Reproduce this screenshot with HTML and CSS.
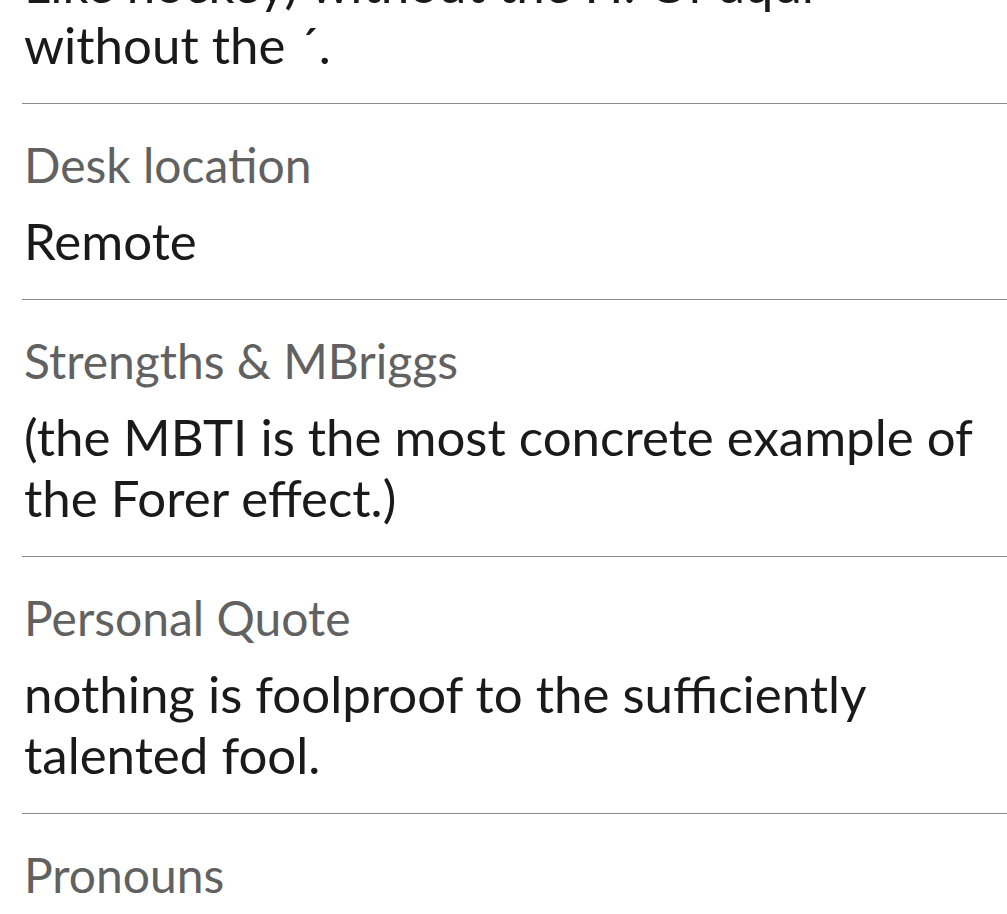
FILE: index.html
```html
<!DOCTYPE html>
<html lang="en">
<head>
<meta charset="utf-8">
<title>Profile fields</title>
<link rel="stylesheet" href="styles.css">
</head>
<body>
<div class="fields">
  <div class="field">
    <div class="label">Pronunciation</div>
    <div class="value">Like hockey) without the H. Or aqui<br>without the ´.</div>
  </div>
  <div class="field">
    <div class="label">Desk location</div>
    <div class="value">Remote</div>
  </div>
  <div class="field">
    <div class="label">Strengths &amp; MBriggs</div>
    <div class="value">(the MBTI is the most concrete example of the Forer effect.)</div>
  </div>
  <div class="field">
    <div class="label">Personal Quote</div>
    <div class="value">nothing is foolproof to the sufficiently talented fool.</div>
  </div>
  <div class="field">
    <div class="label">Pronouns</div>
    <div class="value">he/him</div>
  </div>
</div>
</body>
</html>
```
FILE: styles.css
```css
html, body {
  margin: 0;
  padding: 0;
  background: #ffffff;
}
body {
  font-family: Lato, "Open Sans", sans-serif;
  overflow: hidden;
}
.fields {
  margin-top: -153px;
  padding-left: 22px;
}
.field {
  display: flex;
  flex-direction: column;
  gap: 15px;
  padding: 31px 0 28px 0;
  border-bottom: 1px solid #8a8a8a;
}
.label {
  font-size: 48px;
  line-height: 60px;
  color: #616161;
  padding-left: 2px;
}
.value {
  font-size: 51px;
  line-height: 61px;
  color: #1a1a1a;
  padding-left: 2px;
  padding-right: 22px;
}
```
